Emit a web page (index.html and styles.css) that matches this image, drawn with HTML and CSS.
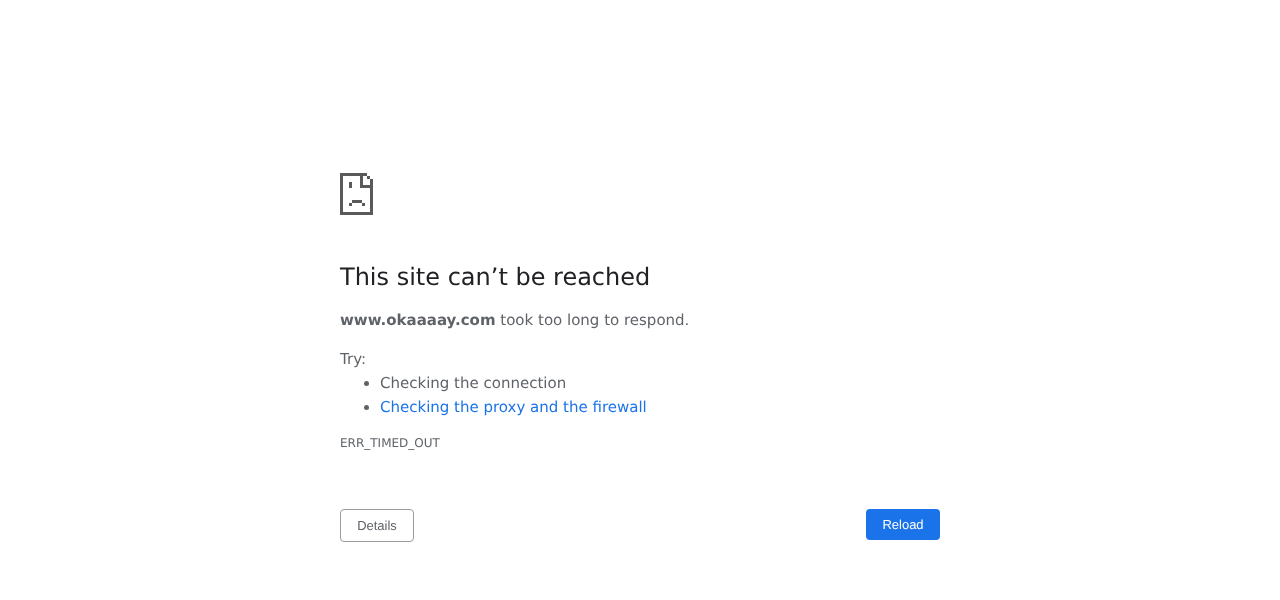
FILE: index.html
```html
<!DOCTYPE html>
<html lang="en">
<head>
    <meta charset="UTF-8">
    <title>www.okaaaay.com</title>
    <link rel="stylesheet" href="styles.css">
</head>
<body>
    <div class="container">
        <div class="icon">
            <svg width="33" height="42" viewBox="0 0 33 42" shape-rendering="crispEdges" fill="#5a5a5a">
                <rect x="0" y="0" width="27" height="3"/>
                <rect x="27" y="3" width="3" height="3"/>
                <rect x="30" y="6" width="3" height="36"/>
                <rect x="0" y="0" width="3" height="42"/>
                <rect x="0" y="39" width="33" height="3"/>
                <rect x="20" y="3" width="3" height="12"/>
                <rect x="20" y="12" width="13" height="3"/>
                <rect x="9" y="9" width="3" height="6"/>
                <rect x="12" y="27" width="10" height="3"/>
                <rect x="9" y="30" width="3" height="3"/>
                <rect x="22" y="30" width="3" height="3"/>
            </svg>
        </div>
        <h1>This site can’t be reached</h1>
        <p class="summary"><strong>www.okaaaay.com</strong> took too long to respond.</p>
        <div class="suggestions">
            <p>Try:</p>
            <ul>
                <li>Checking the connection</li>
                <li><a href="#">Checking the proxy and the firewall</a></li>
            </ul>
        </div>
        <div class="error-code">ERR_TIMED_OUT</div>
        <div class="buttons">
            <button class="details">Details</button>
            <button class="reload">Reload</button>
        </div>
    </div>
</body>
</html>
```

FILE: styles.css
```css
body {
    margin: 0;
    background: #ffffff;
    color: #5f6368;
    font-family: 'DejaVu Sans', sans-serif;
    font-size: 15px;
    text-rendering: geometricPrecision;
}
.container {
    width: 600px;
    margin: 0 auto;
    padding-top: 173px;
    will-change: transform;
}
.icon {
    height: 42px;
    margin-bottom: 42px;
}
.icon svg {
    display: block;
}
h1 {
    margin: 0 0 11px;
    color: #202124;
    font-size: 24px;
    font-weight: 400;
    line-height: 40px;
}
p {
    margin: 0;
}
.summary {
    line-height: 24px;
    margin-bottom: 15px;
}
.suggestions {
    line-height: 24px;
}
ul {
    margin: 0;
    padding-left: 40px;
}
a {
    color: #1a73e8;
    text-decoration: none;
}
.error-code {
    margin-top: 16px;
    font-size: 12px;
    line-height: 16px;
}
.buttons {
    display: flex;
    justify-content: space-between;
    align-items: flex-start;
    margin-top: 58px;
}
button {
    width: 74px;
    font-family: 'Liberation Sans', sans-serif;
    font-size: 13px;
    text-rendering: geometricPrecision;
    border-radius: 4px;
}
.details {
    height: 33px;
    background: #ffffff;
    color: #5f6368;
    border: 1px solid #9a9ca0;
}
.reload {
    height: 31px;
    background: #1a73e8;
    color: #ffffff;
    border: none;
}
```
